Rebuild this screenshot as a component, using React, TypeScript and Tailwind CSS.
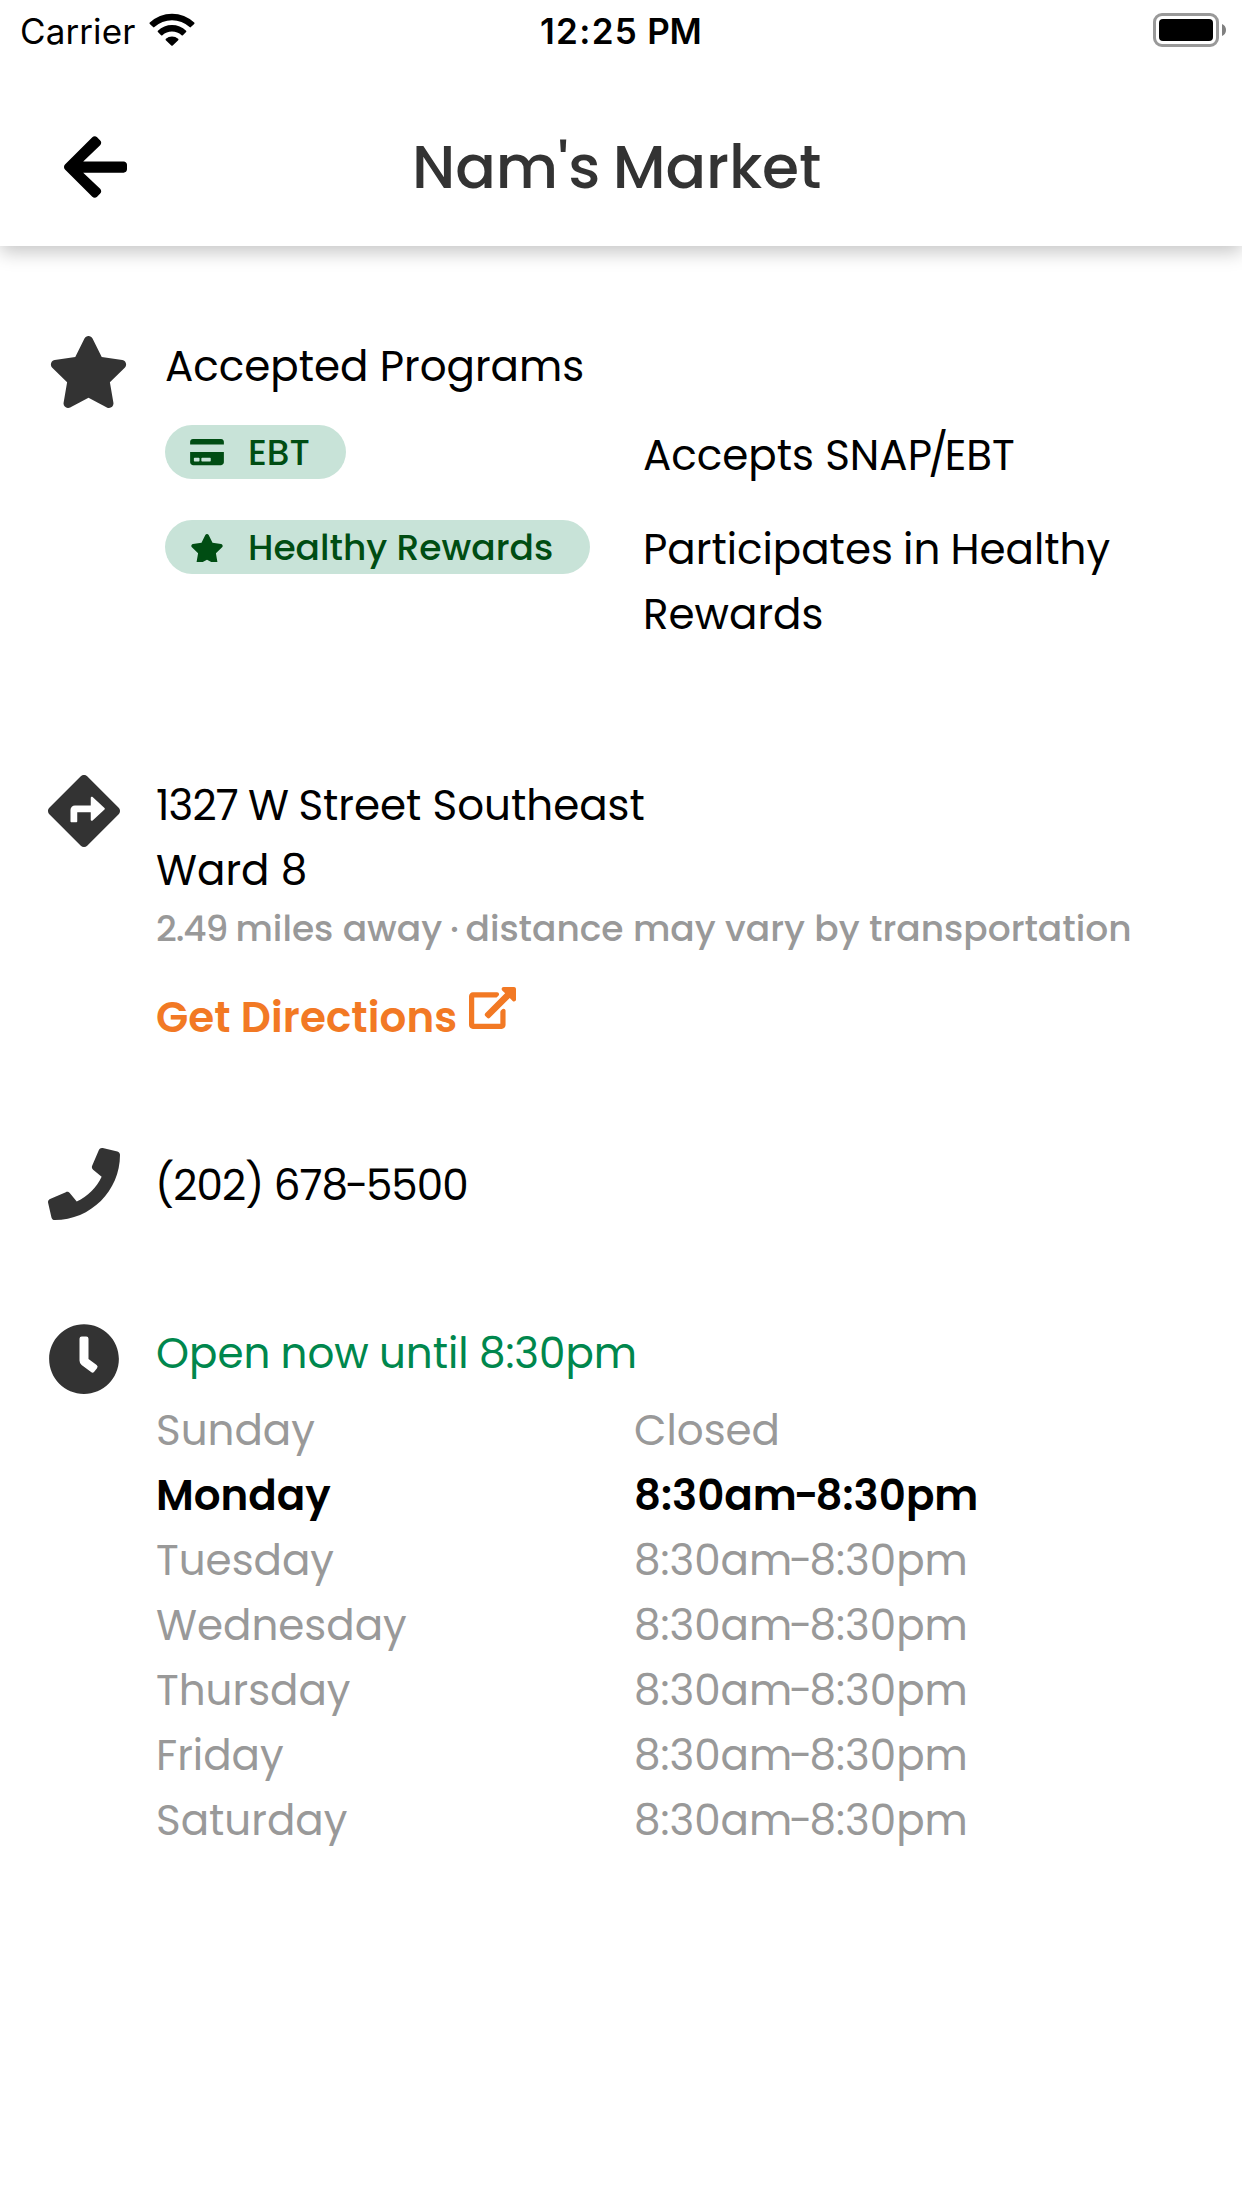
import type { ReactNode } from "react";
import {
  FaArrowLeft,
  FaClock,
  FaCreditCard,
  FaDirections,
  FaPhone,
  FaStar,
} from "react-icons/fa";

function WifiIcon() {
  return (
    <svg viewBox="0 0 46 34" className="h-[34px] w-[46px]" fill="currentColor">
      <path d="M.8 9.6a32 32 0 0 1 44.4 0c.4.4.4.9 0 1.3l-3.3 3.2c-.4.4-.9.4-1.3 0a26 26 0 0 0-35.2 0c-.4.4-.9.4-1.3 0L.8 10.9c-.4-.4-.4-.9 0-1.3Z" />
      <path d="M8.9 17.7a20.6 20.6 0 0 1 28.2 0c.4.4.4.9 0 1.3l-3.2 3.2c-.4.4-.9.4-1.3 0a14.4 14.4 0 0 0-19.2 0c-.4.4-.9.4-1.3 0L8.9 19c-.4-.4-.4-.9 0-1.3Z" />
      <path d="M16.9 25.8a9.2 9.2 0 0 1 12.2 0c.5.4.5 1 .1 1.4l-5.5 5.3c-.4.4-1 .4-1.4 0l-5.5-5.3c-.4-.4-.4-1 .1-1.4Z" />
    </svg>
  );
}

function BatteryIcon() {
  return (
    <svg viewBox="0 0 73 34" className="h-[34px] w-[73px]">
      <rect x="1.5" y="1.5" width="63" height="31" rx="7.5" fill="none" stroke="#999" strokeWidth="3" />
      <rect x="6" y="6" width="54" height="22" rx="4" fill="#000" />
      <path d="M69 11c2.5.9 4 3.3 4 6s-1.5 5.1-4 6V11Z" fill="#808080" />
    </svg>
  );
}

function ExternalLinkIcon() {
  return (
    <svg viewBox="0 0 576 512" className="h-[42px] w-[47px]" fill="currentColor">
      <path d="M576 24v127.984c0 21.461-25.96 31.98-40.971 16.971l-35.707-35.709-243.523 243.523c-9.373 9.373-24.568 9.373-33.941 0l-22.627-22.627c-9.373-9.373-9.373-24.569 0-33.941L442.756 76.676l-35.703-35.705C391.982 25.9 402.656 0 424.024 0H552c13.255 0 24 10.745 24 24zM407.029 270.794l-16 16A23.999 23.999 0 0 0 384 303.765V448H64V128h264a24.003 24.003 0 0 0 16.97-7.029l16-16C376.089 89.851 365.381 64 344 64H48C21.49 64 0 85.49 0 112v352c0 26.51 21.49 48 48 48h352c26.51 0 48-21.49 48-48V287.764c0-21.382-25.852-32.09-40.971-16.97z" />
    </svg>
  );
}

function Badge({ icon, children, className }: { icon: ReactNode; children: ReactNode; className: string }) {
  return (
    <div className={`mt-[3px] flex h-[54px] items-center rounded-full bg-[#c8e3d8] pl-[25px] text-[36px] font-medium text-[#004d13] ${className}`}>
      {icon}
      <span className="ml-6 pt-[2px] whitespace-nowrap leading-[54px]">{children}</span>
    </div>
  );
}

function TimeRange({ from, to }: { from: string; to: string }) {
  return (
    <>
      {from.slice(0, -1)}
      <span className="tracking-[-2.9px]">{from.slice(-1)}-</span>
      {to}
    </>
  );
}

const hours = [
  { day: "Sunday" },
  { day: "Monday", from: "8:30am", to: "8:30pm", today: true },
  { day: "Tuesday", from: "8:30am", to: "8:30pm" },
  { day: "Wednesday", from: "8:30am", to: "8:30pm" },
  { day: "Thursday", from: "8:30am", to: "8:30pm" },
  { day: "Friday", from: "8:30am", to: "8:30pm" },
  { day: "Saturday", from: "8:30am", to: "8:30pm" },
];

export default function App() {
  return (
    <div className="min-h-[2208px] w-[1242px] overflow-hidden bg-white font-['Poppins','Inter',sans-serif] text-[42px] leading-[65px] text-black">
      <header className="shadow-[0_6px_18px_rgba(0,0,0,0.23)]">
        <div className="grid h-[62px] grid-cols-[540px_1fr_auto] pr-4 pl-5 font-['Inter',sans-serif] text-[35px] leading-[62px]">
          <div className="flex">
            <span className="w-[129px] tracking-[0.1px]">Carrier</span>
            <div className="mt-[13px]">
              <WifiIcon />
            </div>
          </div>
          <div className="-ml-5 font-semibold tracking-[1.3px]">
            12:25 <span className="-ml-px tracking-[-0.2px]">PM</span>
          </div>
          <div className="mt-[13px]">
            <BatteryIcon />
          </div>
        </div>
        <div className="grid h-[184px] grid-cols-[412px_1fr] items-center pt-[26px]">
          <button aria-label="Back" className="pl-16">
            <FaArrowLeft className="h-[72px] w-[63px]" />
          </button>
          <h1 className="text-[60px] font-medium tracking-[-0.1px] text-[#333] [word-spacing:-3px]">Nam&apos;s Market</h1>
        </div>
      </header>

      <main className="pt-[88px] pl-12">
        <section className="flex h-[438px]">
          <FaStar className="mt-[2px] h-[72px] w-[81px] shrink-0 text-[#333]" />
          <div className="ml-9">
            <h2>Accepted Programs</h2>
            <div className="mt-[23px] grid grid-cols-[478px_500px] gap-y-[29px]">
              <Badge className="w-[181px]" icon={<FaCreditCard className="h-[30px] w-[34px]" />}>
                EBT
              </Badge>
              <div className="mt-px">
                Accepts SNA<span className="tracking-[-3.6px]">P/</span>EBT
              </div>
              <Badge
                className="w-[425px]"
                icon={
                  <span className="mt-[2px] block h-7 overflow-hidden">
                    <FaStar className="h-[30px] w-[34px]" />
                  </span>
                }
              >
                Healthy Rewards
              </Badge>
              <div className="[word-spacing:-1px]">
                Participates in Healthy
                <br />
                Rewards
              </div>
            </div>
          </div>
        </section>

        <section className="flex h-[380px]">
          <FaDirections className="mt-[3px] size-[72px] shrink-0 text-[#333]" />
          <div className="ml-9 mt-px whitespace-nowrap">
            <div>
              <span className="tracking-[-0.9px]">1327 W </span>Street Southeast
            </div>
            <div>Ward 8</div>
            <div className="text-[36px] leading-[51px] font-medium text-[#999]">
              <span className="tracking-[-1.1px]">2.49 </span>miles away<span className="tracking-[-1.4px]"> · </span>distance may vary by
              transportation
            </div>
            <a className="mt-[31px] flex font-semibold text-[#f27924]">
              <span className="w-[313px] tracking-[0.1px]">Get Directions</span>
              <span className="mt-[2px]">
                <ExternalLinkIcon />
              </span>
            </a>
          </div>
        </section>

        <section className="flex h-[168px]">
          <FaPhone className="-mt-1 size-[72px] shrink-0 text-[#333]" />
          <div className="ml-[35px] mt-px tracking-[-0.9px]">
            (202) 67<span className="tracking-[-2.6px]">8-</span>5500
          </div>
        </section>

        <section className="flex">
          <FaClock className="mt-[3px] size-[72px] shrink-0 text-[#333]" />
          <div className="ml-9 mt-px">
            <div className="text-[#00874d] [word-spacing:-1px]">Open now until 8:30pm</div>
            <div className="mt-3 grid grid-cols-[478px_auto]">
              {hours.map((h) => (
                <div key={h.day} className={`col-span-2 grid grid-cols-subgrid ${h.today ? "font-semibold text-black" : "text-[#999]"}`}>
                  <span>{h.day}</span>
                  <span>{h.from && h.to ? <TimeRange from={h.from} to={h.to} /> : "Closed"}</span>
                </div>
              ))}
            </div>
          </div>
        </section>
      </main>
    </div>
  );
}
